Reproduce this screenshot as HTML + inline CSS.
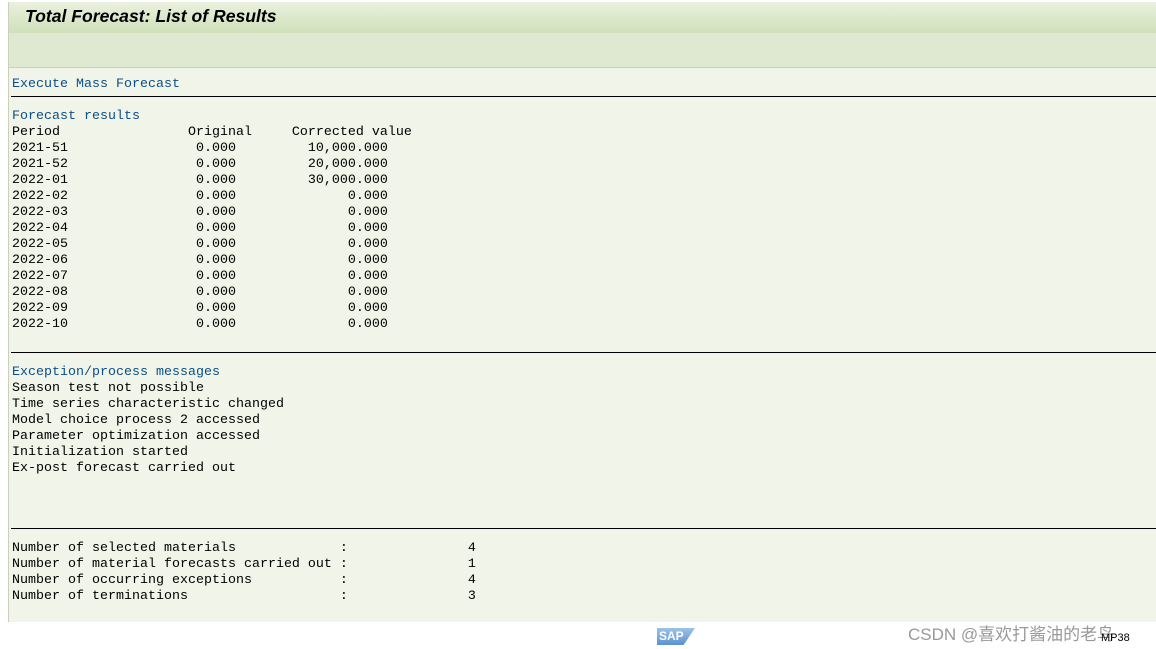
<html><head><style>
body{margin:0;width:1156px;height:649px;background:#fff;position:relative;overflow:hidden;font-family:"Liberation Sans",sans-serif}
#frame{position:absolute;left:8px;top:2px;width:1148px;height:620px;background:#f1f4e9;border-left:1px solid #c9d1bd}
#title{position:absolute;left:0;top:0;width:1148px;height:31px;background:linear-gradient(#eaf1df,#cfe0b9);}
#title span{position:absolute;left:16px;top:4px;font-weight:bold;font-style:italic;font-size:17.6px;color:#000}
#tb{position:absolute;left:0;top:31px;width:1148px;height:34px;background:#dfe8d0;border-bottom:1px solid #c8d2b8}
pre{position:absolute;left:12px;top:77px;margin:0;font-family:"Liberation Mono",monospace;font-size:13.33px;line-height:16px;color:#000}
.b{color:#0a4f8a}
.hr{position:absolute;left:11px;width:1145px;height:1px;background:#000}
</style></head><body>
<div id="frame"><div id="title"><span>Total Forecast: List of Results</span></div><div id="tb"></div></div>
<pre><span class="b">Execute Mass Forecast</span>

<span class="b">Forecast results</span>
Period                Original     Corrected value
2021-51                0.000         10,000.000
2021-52                0.000         20,000.000
2022-01                0.000         30,000.000
2022-02                0.000              0.000
2022-03                0.000              0.000
2022-04                0.000              0.000
2022-05                0.000              0.000
2022-06                0.000              0.000
2022-07                0.000              0.000
2022-08                0.000              0.000
2022-09                0.000              0.000
2022-10                0.000              0.000


<span class="b">Exception/process messages</span>
Season test not possible
Time series characteristic changed
Model choice process 2 accessed
Parameter optimization accessed
Initialization started
Ex-post forecast carried out




Number of selected materials             :               4
Number of material forecasts carried out :               1
Number of occurring exceptions           :               4
Number of terminations                   :               3</pre>
<div class="hr" style="top:96px"></div>
<div class="hr" style="top:352px"></div>
<div class="hr" style="top:528px"></div>
<div style="position:absolute;left:657px;top:628px;width:38px;height:17px;background:linear-gradient(#9cc3ea,#5a92d0);clip-path:polygon(0 0,100% 0,70% 100%,0 100%);color:#fff;font-weight:bold;font-size:12px;line-height:17px;padding-left:2px;box-sizing:border-box">SAP</div>
<div style="position:absolute;left:908px;top:620px;font-size:17px;color:#999;font-family:'Liberation Sans','Noto Sans CJK SC',sans-serif">CSDN @喜欢打酱油的老鸟</div>
<div style="position:absolute;left:1101px;top:632px;font-size:11px;color:#000">MP38</div>
</body></html>
